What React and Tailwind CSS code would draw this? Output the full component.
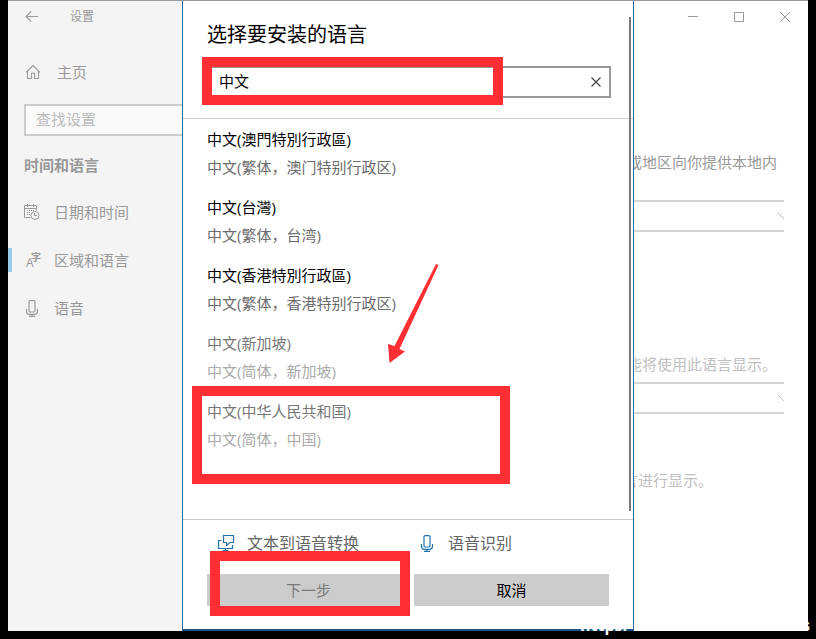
import React, { useState } from "react";

const languages = [
  { name: "中文(澳門特別行政區)", local: "中文(繁体，澳门特别行政区)" },
  { name: "中文(台灣)", local: "中文(繁体，台湾)" },
  { name: "中文(香港特別行政區)", local: "中文(繁体，香港特别行政区)" },
  { name: "中文(新加坡)", local: "中文(简体，新加坡)", installed: true },
  { name: "中文(中华人民共和国)", local: "中文(简体，中国)", installed: true, marked: true },
];

function BackIcon() {
  return (
    <svg width="14" height="12" viewBox="0 0 14 12" fill="none" stroke="currentColor" strokeWidth="1.2">
      <path d="M13 5.500H1M6.2 .5 1 5.500l5.2 5.200" />
    </svg>
  );
}

function HomeIcon() {
  return (
    <svg width="16" height="16" viewBox="0 0 16 16" fill="none" stroke="currentColor" strokeWidth="1.1">
      <path d="M1 8.4 8 1.5l7 6.9M2.5 7.2v7.3h4V9.2h3v5.3h4V7.2" />
    </svg>
  );
}

function DateIcon() {
  return (
    <svg width="16" height="16" viewBox="0 0 16 16" fill="none" stroke="currentColor">
      <path d="M6.5 13.5h-6v-12h12v5M.5 4.5h12M3.5 0v3M9.5 0v3" />
      <path d="M3 6.500h1M5 6.500h1M7 6.500h1M9 6.500h1M3 8.500h1M5 8.500h1M3 10.500h1M5 10.500h1" />
      <circle cx="11" cy="11.5" r="4" />
      <path d="M10.500 9v2.500H13" />
    </svg>
  );
}

function LanguageIcon() {
  return (
    <span className="relative block h-4 w-4" aria-hidden="true">
      <span className="absolute bottom-0 left-0.5 text-xs leading-[11px]">A</span>
      <span className="absolute -right-px top-0 text-[10px] leading-[10px] font-bold">字</span>
    </span>
  );
}

function MicIcon() {
  return (
    <svg width="14" height="17" viewBox="0 0 14 17" fill="none" stroke="currentColor" strokeWidth="1.2">
      <rect x="4" y=".6" width="6" height="11.4" rx="1.2" />
      <path d="M1.5 9v2.2c0 1.9 1.2 3.1 3 3.1h5c1.8 0 3-1.2 3-3.1V9M7 14.3v2M4 16.3h6" />
    </svg>
  );
}

function SpeechIcon() {
  return (
    <svg width="18" height="18" viewBox="0 0 18 18" fill="none" stroke="currentColor" strokeWidth="1.2">
      <path d="M6.5 1.500h10v7h-3.500l-3.500 3V8.500h-3zM4.500 6.500h-3v8h14v-3.500M8.500 14.500v2M5.500 16.500h6" />
    </svg>
  );
}

const navItems = [
  { label: "日期和时间", icon: DateIcon },
  { label: "区域和语言", icon: LanguageIcon, current: true },
  { label: "语音", icon: MicIcon },
];

function Highlight({ className = "" }) {
  return (
    <div className={`pointer-events-none absolute z-10 border-10 border-[#ff2f33] ${className}`} />
  );
}

function Sidebar() {
  return (
    <aside className="w-[174px] shrink-0 bg-[#f4f4f4] text-[15px] text-[#999]">
      <div className="flex h-[31px] items-center pl-[17px]">
        <button aria-label="返回">
          <BackIcon />
        </button>
        <span className="ml-[31px] text-xs">设置</span>
      </div>
      <a href="#home" className="mt-4 flex h-12 items-center gap-4 pl-[17px]">
        <HomeIcon />
        主页
      </a>
      <div className="mt-2 pl-4">
        <input
          type="search"
          aria-label="查找设置"
          placeholder="查找设置"
          className="h-8 w-full border-2 border-r-0 border-[#ccc] bg-[#fafafa] pb-0.5 pl-2.5 outline-none placeholder:text-[#bbb]"
        />
      </div>
      <h2 className="mt-[17px] mb-[11px] pl-4 leading-6 font-bold">时间和语言</h2>
      <nav>
        {navItems.map(({ label, icon: Icon, current }) => (
          <a
            key={label}
            href="#settings"
            aria-current={current ? "page" : undefined}
            className="flex h-12 items-center"
          >
            <span className={`h-6 w-1 ${current ? "bg-[#9ac9ee]" : ""}`} />
            <span className="flex w-10 justify-center">
              <Icon />
            </span>
            <span className="pl-0.5">{label}</span>
          </a>
        ))}
      </nav>
    </aside>
  );
}

function SelectBox({ label, className = "" }) {
  return (
    <div className={`relative ${className}`}>
      <select
        aria-label={label}
        className="block h-8 w-full appearance-none border-y-2 border-[#d4d4d4] bg-white outline-none"
      />
      <svg
        className="pointer-events-none absolute top-3 right-0 text-[#bbb]"
        width="7"
        height="8"
        viewBox="0 0 7 8"
        fill="none"
        stroke="currentColor"
      >
        <path d="M1 1l6 6" />
      </svg>
    </div>
  );
}

function RegionPane() {
  return (
    <main className="w-[174px] shrink-0 overflow-hidden bg-white text-[15px] whitespace-nowrap text-[#c0c0c0]">
      <div className="flex h-[31px] justify-end text-[#999]">
        <button aria-label="最小化" className="flex w-[46px] items-center justify-center">
          <svg width="10" height="10" viewBox="0 0 10 10" stroke="currentColor">
            <path d="M0 4.500h10" />
          </svg>
        </button>
        <button aria-label="最大化" className="flex w-[46px] items-center justify-center">
          <svg width="10" height="10" viewBox="0 0 10 10" fill="none" stroke="currentColor">
            <path d="M.5 .5h9v9h-9z" />
          </svg>
        </button>
        <button aria-label="关闭" className="flex w-[46px] items-center justify-center">
          <svg width="10" height="10" viewBox="0 0 10 10" stroke="currentColor">
            <path d="M0 0l10 10M10 0L0 10" />
          </svg>
        </button>
      </div>
      <div className="-ml-[7px] pr-6">
        <p className="mt-[116px] leading-7 text-[#999]">或地区向你提供本地内</p>
        <SelectBox label="国家或地区" className="mt-6" />
        <p className="mt-[118px] leading-7">能将使用此语言显示。</p>
        <SelectBox label="显示语言" className="mt-1" />
        <p className="mt-[52px] -ml-1 leading-7">言进行显示。</p>
      </div>
    </main>
  );
}

function LanguageDialog() {
  const [query, setQuery] = useState("中文");

  return (
    <section
      role="dialog"
      aria-labelledby="dialog-title"
      className="relative flex min-w-0 flex-1 flex-col border-x border-b-2 border-x-[#2a6c9c] border-b-[#1b5484] bg-white text-[15px] text-black"
    >
      <div className="relative flex-1">
        <header className="border-b border-[#ccc] pt-[18px] pr-[22px] pb-5 pl-6">
          <h1 id="dialog-title" className="text-xl leading-8">
            选择要安装的语言
          </h1>
          <div className="relative mt-[15px] flex h-8 items-center border-2 border-[#999]">
            <input
              type="text"
              aria-label="搜索语言"
              value={query}
              onChange={(e) => setQuery(e.target.value)}
              className="h-7 min-w-0 flex-1 bg-white pb-1 pl-2.5 outline-none"
            />
            <button
              aria-label="清除"
              onClick={() => setQuery("")}
              className="flex h-7 w-[26px] items-center justify-center text-[#444]"
            >
              <svg width="10" height="10" viewBox="0 0 10 10" stroke="currentColor" strokeWidth="1.2">
                <path d="M.5 .5l9 9M9.500 .5l-9 9" />
              </svg>
            </button>
            <Highlight className="-top-[11px] -left-[7px] h-12 w-[301px]" />
          </div>
        </header>

        <ul className="flex flex-col gap-3 px-6 pt-1.5">
          {languages.map((lang) => (
            <li key={lang.name} className="relative">
              <button
                disabled={lang.installed}
                className="block w-full text-left leading-7 text-black disabled:text-[#777]"
              >
                <span className="block">{lang.name}</span>
                <span className={`block ${lang.installed ? "text-[#aaa]" : "text-[#6c6c6c]"}`}>
                  {lang.local}
                </span>
              </button>
              {lang.marked && <Highlight className="-top-[11px] -left-[15px] h-[98px] w-[318px]" />}
            </li>
          ))}
        </ul>

        <div className="absolute top-4 right-0.5 bottom-2 w-0.5 bg-[#7a7a7a]" />
        <svg
          className="pointer-events-none absolute top-[263px] left-[205px] z-10"
          width="51"
          height="100"
          viewBox="0 0 51 100"
          fill="#ff2f33"
        >
          <path d="M48 0l2.500 1-39 84 5.500 2.500L1.500 99 0 80l6.500 2z" />
        </svg>
      </div>

      <footer className="border-t border-[#ccc] px-6 pt-2 pb-[23px]">
        <div className="flex h-[30px] items-center text-base text-[#666]">
          <div className="flex w-[202px] items-center gap-3 pl-2.5">
            <span className="text-[#2272aa]">
              <SpeechIcon />
            </span>
            文本到语音转换
          </div>
          <div className="flex items-center gap-3.5 pl-[11px]">
            <span className="text-[#2272aa]">
              <MicIcon />
            </span>
            语音识别
          </div>
        </div>
        <div className="relative mt-4 flex gap-1">
          <button disabled className="h-8 flex-1 bg-[#ccc] text-[#7a7a7a]">
            下一步
          </button>
          <button className="h-8 w-[195px] bg-[#ccc]">取消</button>
          <Highlight className="-top-[23px] left-[3px] h-[65px] w-[200px]" />
        </div>
      </footer>
    </section>
  );
}

export default function App() {
  return (
    <div className="relative flex min-h-screen bg-black px-2 pb-2 font-['Open_Sans','Noto_Sans_CJK_SC',sans-serif]">
      <div className="flex min-w-0 flex-1 border-t border-[#999]">
        <Sidebar />
        <LanguageDialog />
        <RegionPane />
      </div>
      <div className="pointer-events-none absolute right-1.5 bottom-1.5 flex w-[230px] justify-between text-base leading-4 font-bold text-white">
        <span>https:</span>
        <span>s</span>
      </div>
    </div>
  );
}
